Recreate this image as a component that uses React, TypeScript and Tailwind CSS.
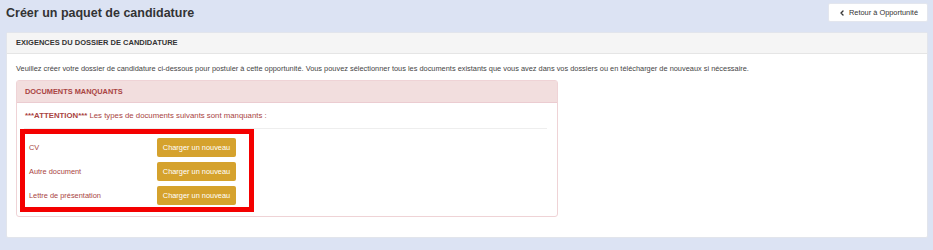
import { ChevronLeft } from 'lucide-react';

const missingDocs = ['CV', 'Autre document', 'Lettre de présentation'];

export default function App() {
  return (
    <div
      className="w-[933px] h-[250px] bg-[#dce3f3] pl-[6px] pr-[5px] overflow-hidden"
      style={{ fontFamily: '"Liberation Sans", Arial, sans-serif' }}
    >
      {/* Page header */}
      <div className="h-[32px] flex items-start justify-between">
        <h1 className="mt-[5px] text-[12.5px] leading-[16px] font-bold text-[#333]">Créer un paquet de candidature</h1>
        <button className="mt-[3px] h-[19px] w-[100px] flex items-center justify-center gap-[3px] bg-white border border-[#e3e6ee] rounded-[2px] text-[7.4px] text-[#333]">
          <ChevronLeft className="w-[8px] h-[8px]" strokeWidth={4} />
          Retour à Opportunité
        </button>
      </div>

      {/* Requirements panel */}
      <div className="h-[206px] bg-white border border-[#e2e5ec] rounded-[2px]">
        <div className="h-[21px] flex items-center px-[9px] bg-[#f5f5f5] border-b border-[#e5e5e5]">
          <span className="text-[7.5px] font-bold text-[#333] uppercase">Exigences du dossier de candidature</span>
        </div>

        <div className="px-[9px] pt-[10px]">
          <p className="text-[7.4px] leading-[10px] text-[#444]">
            Veuillez créer votre dossier de candidature ci-dessous pour postuler à cette opportunité. Vous pouvez sélectionner tous les documents existants que vous avez dans vos dossiers ou en télécharger de nouveaux si nécessaire.
          </p>

          <div className="relative mt-[6px] w-[542px] h-[137px] border border-[#efd3d6] rounded-[3px]">
            <div className="h-[22px] flex items-center px-[8px] bg-[#f2dede] border-b border-[#ebccd1]">
              <span className="text-[7.4px] font-bold text-[#a94442] uppercase">Documents manquants</span>
            </div>

            <div className="pl-[7px] pr-[10px]">
              <div className="h-[26px] flex items-center border-b border-[#eeeeee] text-[7.8px] text-[#a94442]">
                <span className="pl-[1px]">
                  <b>***ATTENTION***</b> Les types de documents suivants sont manquants :
                </span>
              </div>

              <div className="pt-[9px] flex flex-col gap-[5px]">
                {missingDocs.map((doc) => (
                  <div key={doc} className="h-[19px] flex items-center">
                    <span className="w-[133px] pl-[5px] text-[7.4px] text-[#a94442]">{doc}</span>
                    <button className="h-[19px] w-[79px] bg-[#d5a22d] rounded-[2px] text-white text-[7.4px]">
                      Charger un nouveau
                    </button>
                  </div>
                ))}
              </div>
            </div>

            {/* Highlight annotation */}
            <div className="absolute left-[3px] top-[48px] w-[234px] h-[83px] border-[5px] border-[#f40000]" />
          </div>
        </div>
      </div>
    </div>
  );
}
